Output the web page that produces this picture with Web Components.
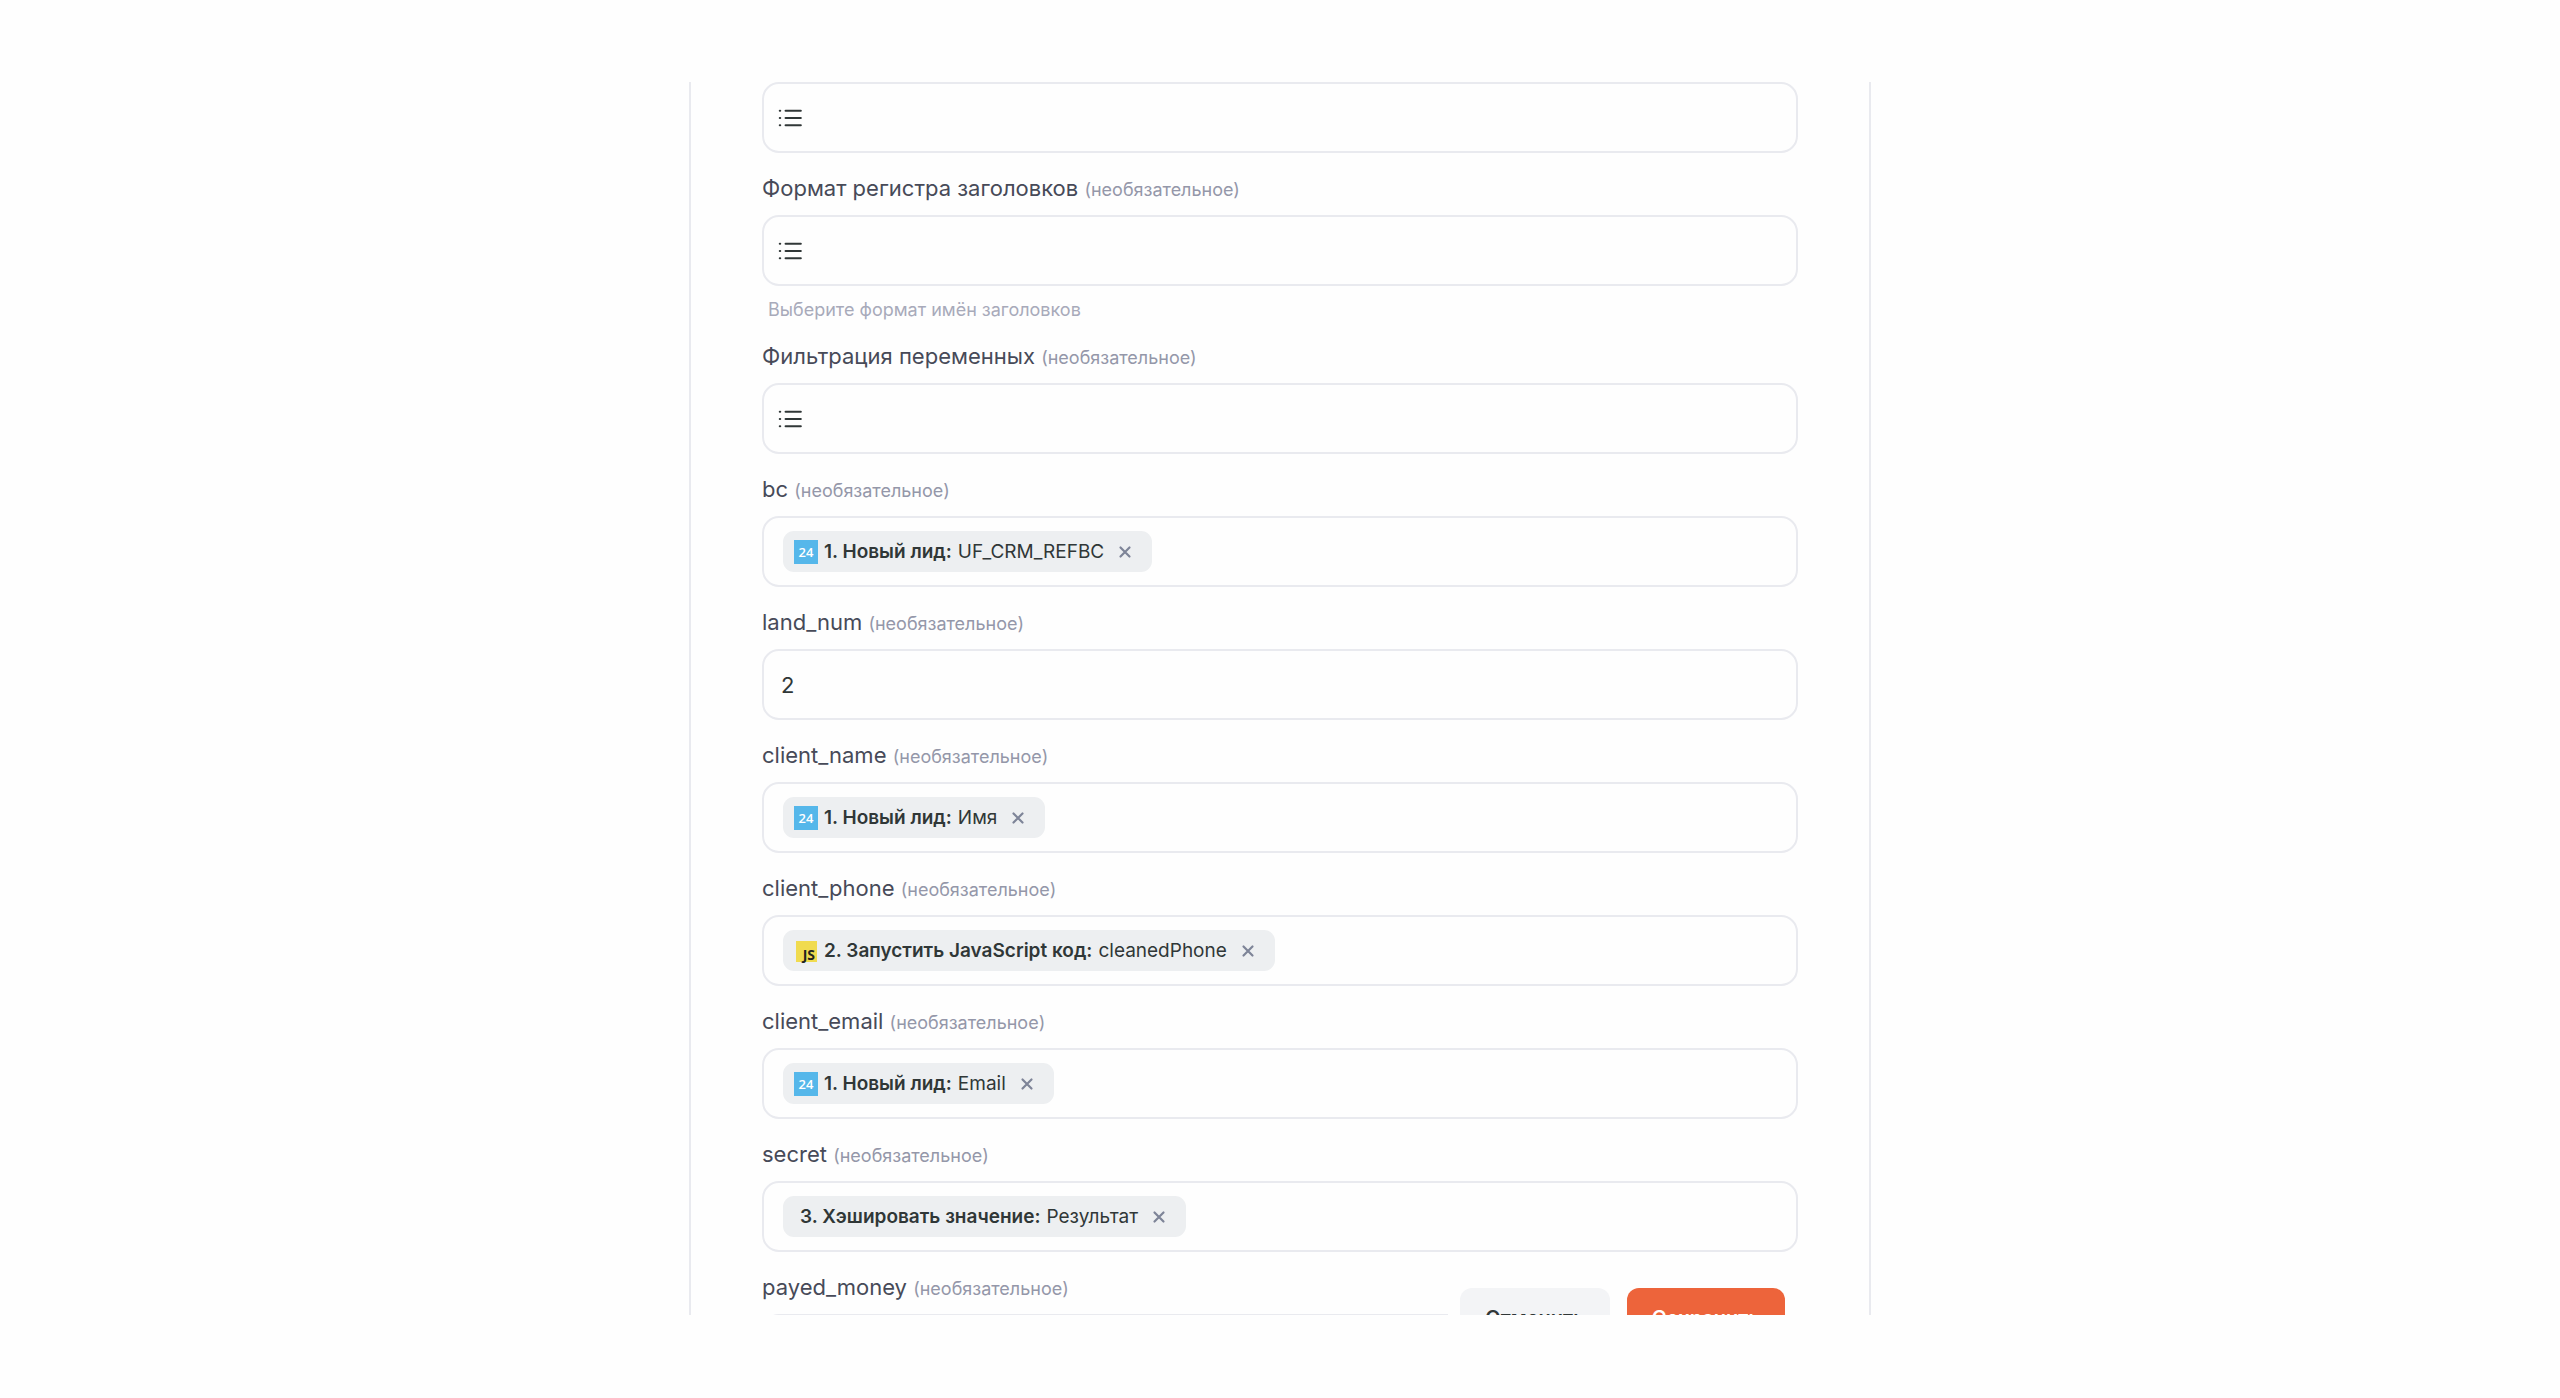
<!DOCTYPE html>
<html lang="ru">
<head>
<meta charset="utf-8">
<meta name="viewport" content="width=device-width, initial-scale=1">
<title>Настройка шага</title>
<style>
  :root {
    --color-page: #fefefe;
    --color-border: #e9eaef;
    --color-label: #474a58;
    --color-muted: #9497a9;
    --color-hint: #a8aaba;
    --color-text: #303737;
    --color-chip: #edeff1;
    --color-cancel: #f3f4f6;
    --color-accent: #ed643b;
  }
  body {
    box-sizing: border-box;
    height: 100vh;
    margin: 0;
    padding: 82px 0 83px;
    background: var(--color-page);
    color: var(--color-text);
    font-family: Inter, "Noto Sans", sans-serif;
  }
</style>
</head>
<body>
<step-panel>
  <form-field type="list"></form-field>
  <form-field type="list" label="Формат регистра заголовков" hint="Выберите формат имён заголовков"></form-field>
  <form-field type="list" label="Фильтрация переменных"></form-field>
  <form-field label="bc"><value-chip icon="b24" step="1. Новый лид:">UF_CRM_REFBC</value-chip></form-field>
  <form-field label="land_num" value="2"></form-field>
  <form-field label="client_name"><value-chip icon="b24" step="1. Новый лид:">Имя</value-chip></form-field>
  <form-field label="client_phone"><value-chip icon="js" step="2. Запустить JavaScript код:">cleanedPhone</value-chip></form-field>
  <form-field label="client_email"><value-chip icon="b24" step="1. Новый лид:">Email</value-chip></form-field>
  <form-field label="secret"><value-chip step="3. Хэшировать значение:">Результат</value-chip></form-field>
  <form-field label="payed_money"></form-field>
  <action-button slot="actions">Отменить</action-button>
  <action-button slot="actions" primary>Сохранить</action-button>
</step-panel>

<script>
const icons = {
  list: `
    <svg width="24" height="20" viewBox="0 0 24 20" fill="none" stroke="currentColor" stroke-width="2.1" stroke-linecap="round" aria-hidden="true">
      <path d="M7.600 2.700h15.200M7.600 10h15.200M7.600 17.300h15.200M1.800 2.700h.4M1.800 10h.4M1.800 17.300h.4"/>
    </svg>`,
  b24: `
    <svg width="24" height="24" viewBox="0 0 24 24" aria-hidden="true">
      <rect width="24" height="24" fill="#55b7ea"/>
      <text x="12" y="17" text-anchor="middle" font-family="Open Sans, sans-serif" font-weight="600" font-size="13" fill="#fff">24</text>
    </svg>`,
  js: `
    <svg width="24" height="24" viewBox="0 0 24 24" aria-hidden="true">
      <rect x="2" y="2" width="21" height="21" fill="#f0db4f"/>
      <text x="21" y="21" text-anchor="end" font-family="Open Sans, sans-serif" font-weight="700" font-size="14" fill="#22241f">JS</text>
    </svg>`,
  close: `
    <svg width="14" height="14" viewBox="0 0 14 14" fill="none" stroke="currentColor" stroke-width="2.2" stroke-linecap="round" aria-hidden="true">
      <path d="M2.500 2.500l9 9M11.500 2.500l-9 9"/>
    </svg>`,
};

const panelTemplate = document.createElement("template");
panelTemplate.innerHTML = `
  <style>
    :host {
      display: block;
      height: 100%;
    }
    .panel {
      box-sizing: border-box;
      position: relative;
      width: 100%;
      max-width: 1182px;
      height: 100%;
      margin: 0 auto;
      padding: 0 71px;
      overflow: hidden;
      border: solid var(--color-border);
      border-width: 0 2px;
    }
    .panel__actions {
      position: absolute;
      right: 70px;
      top: calc(100% - 27px);
      display: flex;
      gap: 17px;
      padding: 0 14px 12px 12px;
      background: var(--color-page);
    }
  </style>
  <form class="panel">
    <slot></slot>
    <div class="panel__actions"><slot name="actions"></slot></div>
  </form>
`;

class StepPanel extends HTMLElement {
  constructor() {
    super();
    this.attachShadow({ mode: "open" });
    this.shadowRoot.appendChild(panelTemplate.content.cloneNode(true));
  }
}

const fieldTemplate = document.createElement("template");
fieldTemplate.innerHTML = `
  <style>
    :host {
      display: block;
    }
    .field__label {
      display: block;
      padding: 21px 0 13px;
      color: var(--color-label);
      font-size: 22px;
      line-height: 28px;
    }
    .field__label[hidden], .field__hint[hidden], .field__icon:empty {
      display: none;
    }
    .field__optional {
      color: var(--color-muted);
      font-size: 18px;
      line-height: 18px;
    }
    .field__box {
      box-sizing: border-box;
      display: flex;
      align-items: center;
      height: 71px;
      padding: 0 17px;
      border: 2px solid var(--color-border);
      border-radius: 17px;
    }
    .field__box[data-type='list'] {
      padding-left: 14px;
    }
    .field__icon {
      display: flex;
    }
    .field__input {
      flex: 1;
      min-width: 0;
      padding: 0;
      border: 0;
      outline: 0;
      background: none;
      color: inherit;
      font: inherit;
      font-size: 22px;
      line-height: 28px;
    }
    .field__hint {
      margin: 0;
      padding: 12px 6px 0;
      color: var(--color-hint);
      font-size: 18px;
      line-height: 23px;
    }
  </style>
  <label class="field__label" for="control"><span class="field__name"></span> <span class="field__optional">(необязательное)</span></label>
  <div class="field__box">
    <span class="field__icon"></span>
    <slot></slot>
    <input class="field__input" id="control" type="text">
  </div>
  <p class="field__hint" hidden></p>
`;

class FormField extends HTMLElement {
  constructor() {
    super();
    this.attachShadow({ mode: "open" });
    this.shadowRoot.appendChild(fieldTemplate.content.cloneNode(true));
    this._label = this.shadowRoot.querySelector(".field__label");
    this._name = this.shadowRoot.querySelector(".field__name");
    this._box = this.shadowRoot.querySelector(".field__box");
    this._icon = this.shadowRoot.querySelector(".field__icon");
    this._input = this.shadowRoot.querySelector(".field__input");
    this._hint = this.shadowRoot.querySelector(".field__hint");
  }

  connectedCallback() {
    const type = this.getAttribute("type") || "text";
    this._label.hidden = !this.hasAttribute("label");
    this._name.textContent = this.getAttribute("label") || "";
    this._box.setAttribute("data-type", type);
    this._icon.innerHTML = type === "list" ? icons.list : "";
    this._input.value = this.getAttribute("value") || "";
    this._hint.hidden = !this.hasAttribute("hint");
    this._hint.textContent = this.getAttribute("hint") || "";
  }
}

const chipTemplate = document.createElement("template");
chipTemplate.innerHTML = `
  <style>
    :host {
      display: block;
      flex: none;
      margin-left: 2px;
    }
    .chip {
      display: flex;
      align-items: center;
      height: 41px;
      padding: 0 20px 0 11px;
      border-radius: 11px;
      background: var(--color-chip);
      font-size: 19px;
      line-height: 24px;
      white-space: nowrap;
    }
    .chip__icon {
      display: flex;
      margin-right: 6px;
    }
    .chip__step {
      margin-right: 6px;
      font-weight: 600;
    }
    .chip__remove {
      display: flex;
      margin: 0 0 0 14px;
      padding: 0;
      border: 0;
      background: none;
      color: #7e8498;
      cursor: pointer;
    }
  </style>
  <div class="chip">
    <span class="chip__icon"></span>
    <span class="chip__step"></span>
    <slot></slot>
    <button class="chip__remove" type="button" aria-label="Удалить">${icons.close}</button>
  </div>
`;

class ValueChip extends HTMLElement {
  constructor() {
    super();
    this.attachShadow({ mode: "open" });
    this.shadowRoot.appendChild(chipTemplate.content.cloneNode(true));
    this._icon = this.shadowRoot.querySelector(".chip__icon");
    this._step = this.shadowRoot.querySelector(".chip__step");
    this.shadowRoot.querySelector(".chip__remove").addEventListener("click", () => this.remove());
  }

  connectedCallback() {
    this._icon.innerHTML = icons[this.getAttribute("icon")] || "";
    this._step.textContent = this.getAttribute("step");
  }
}

const buttonTemplate = document.createElement("template");
buttonTemplate.innerHTML = `
  <style>
    :host {
      display: block;
    }
    .button {
      display: block;
      height: 60px;
      padding: 0 25px;
      border: 0;
      border-radius: 12px;
      background: var(--color-cancel);
      color: var(--color-text);
      font: inherit;
      font-size: 20px;
      font-weight: 600;
      line-height: 24px;
      cursor: pointer;
    }
    :host([primary]) .button {
      background: var(--color-accent);
      color: #fff;
    }
  </style>
  <button class="button" type="button"><slot></slot></button>
`;

class ActionButton extends HTMLElement {
  constructor() {
    super();
    this.attachShadow({ mode: "open" });
    this.shadowRoot.appendChild(buttonTemplate.content.cloneNode(true));
  }
}

customElements.define("value-chip", ValueChip);
customElements.define("form-field", FormField);
customElements.define("action-button", ActionButton);
customElements.define("step-panel", StepPanel);
</script>
</body>
</html>
